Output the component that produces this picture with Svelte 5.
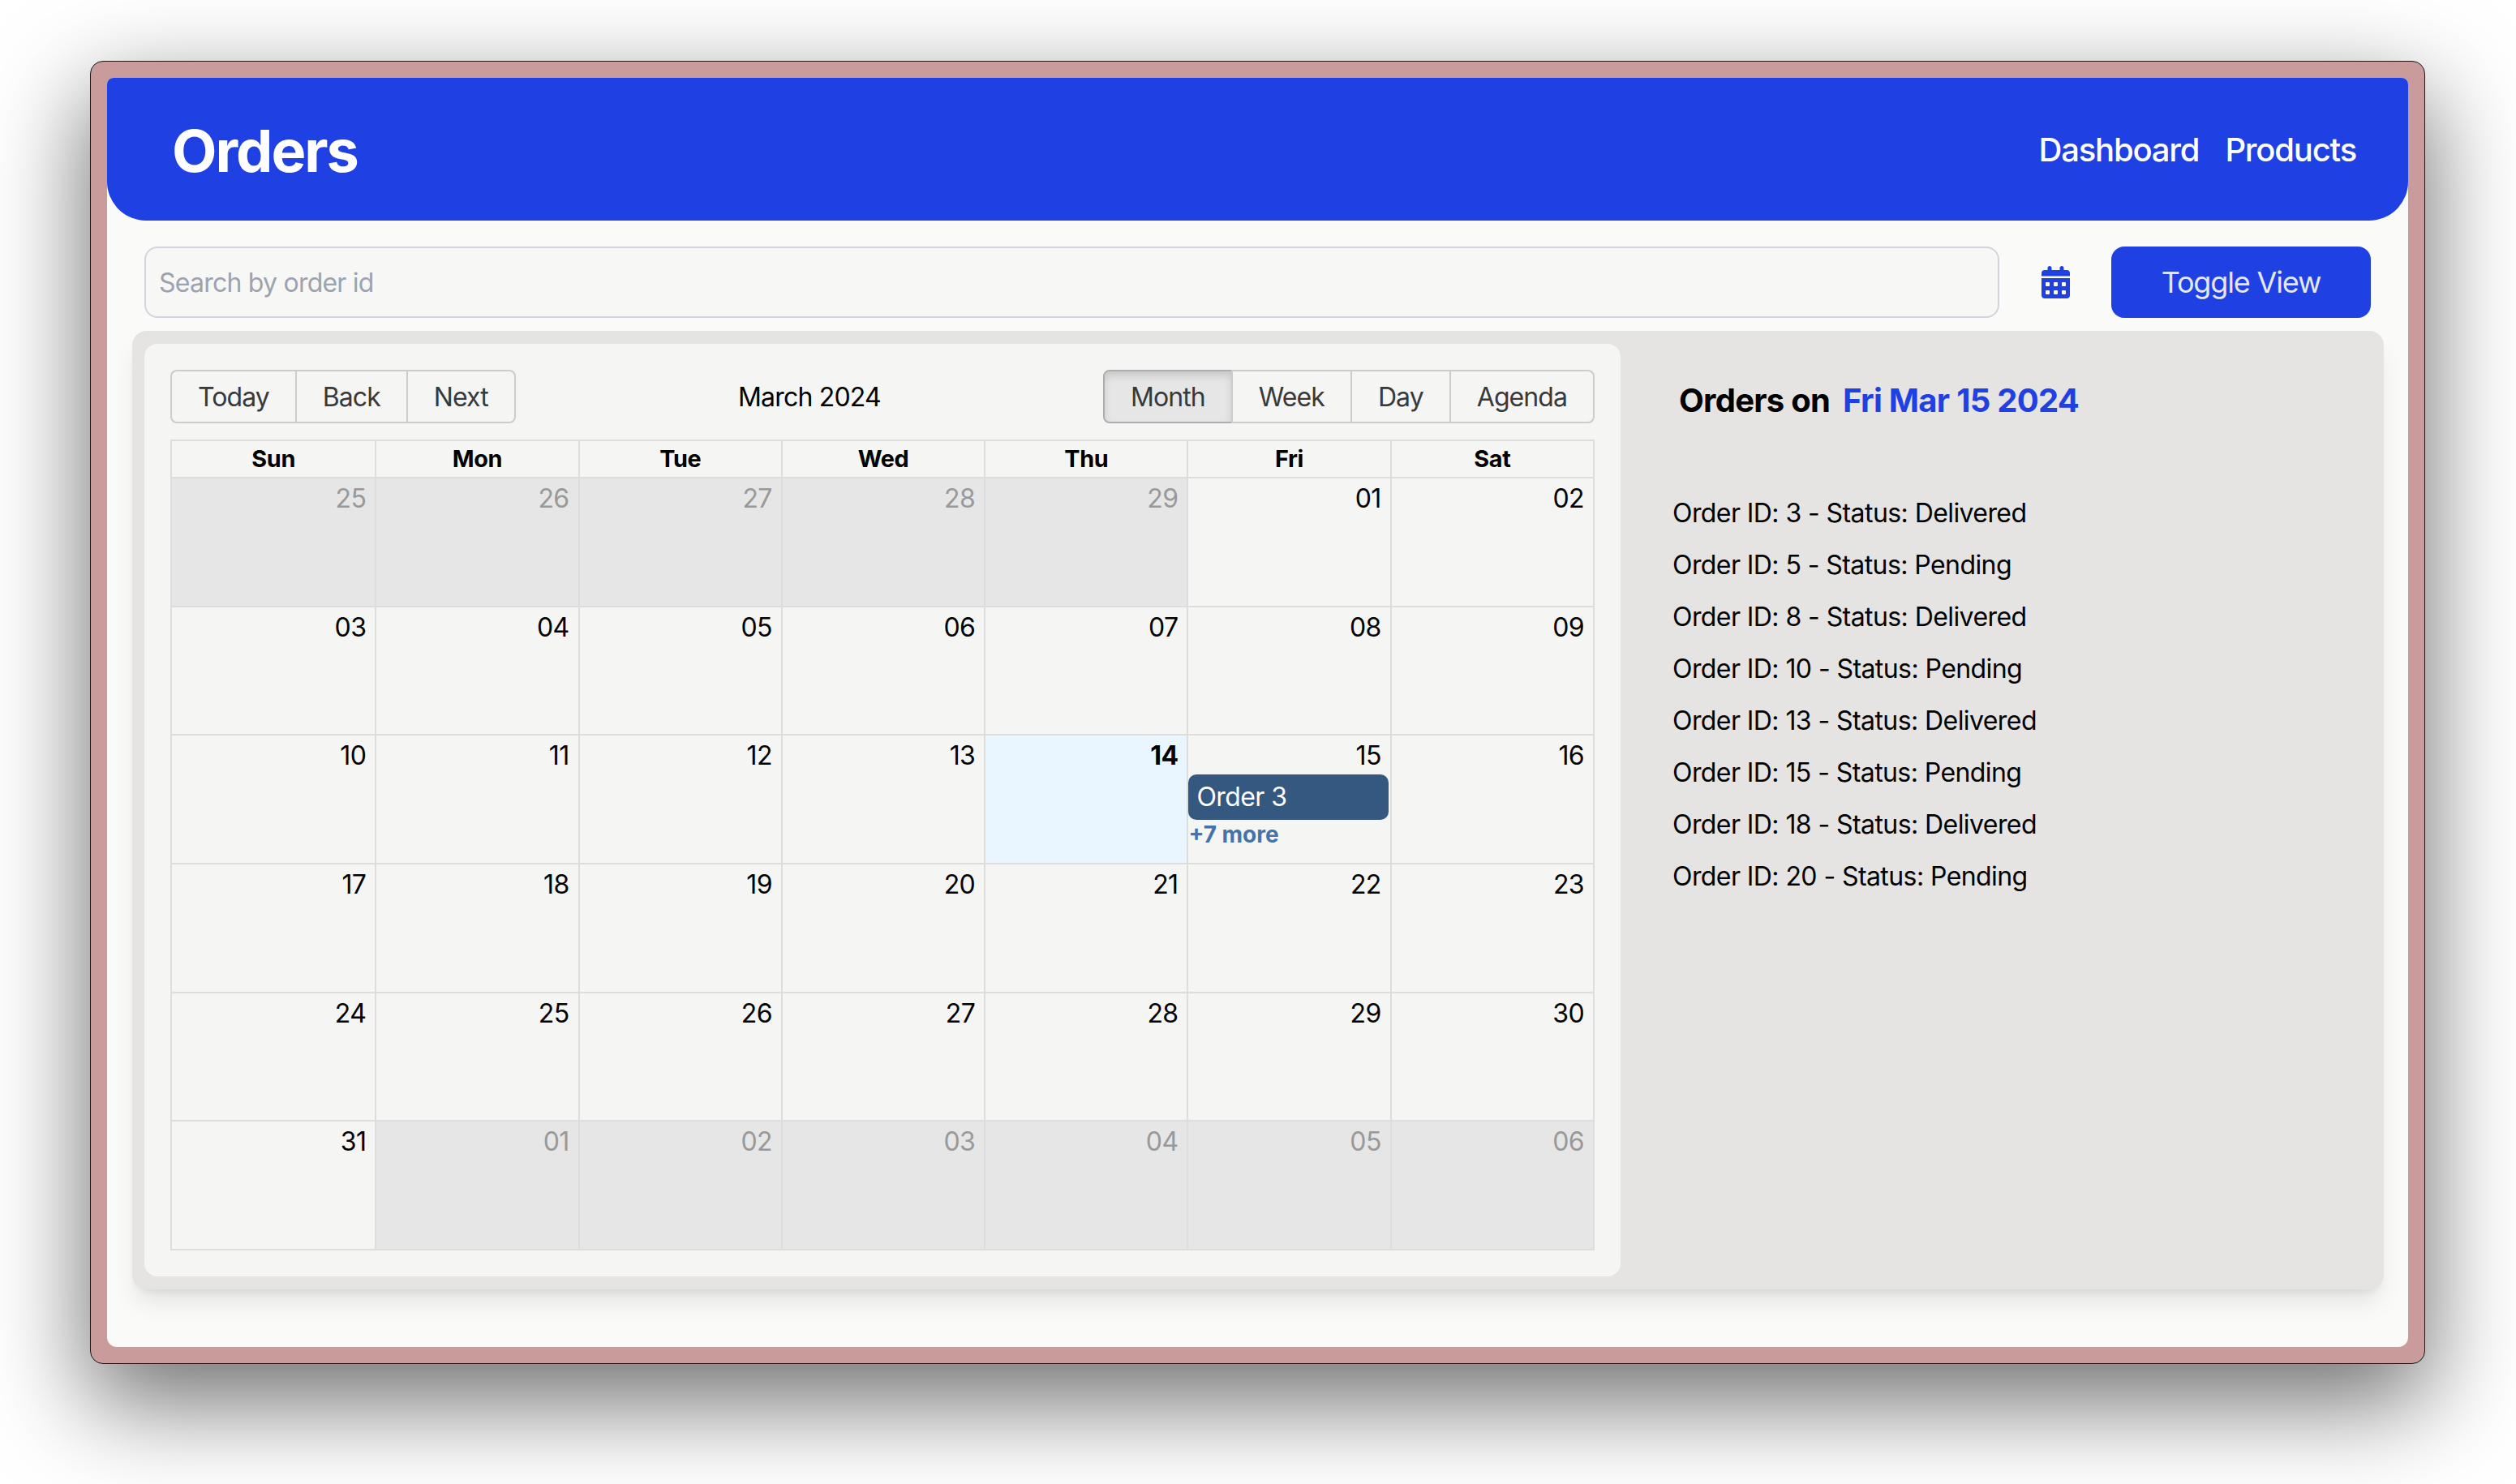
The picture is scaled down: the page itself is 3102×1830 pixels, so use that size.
<script lang="ts">
  const dayNames = ['Sun', 'Mon', 'Tue', 'Wed', 'Thu', 'Fri', 'Sat'];
  const pad = (n: number) => String(n).padStart(2, '0');

  // march 2024 month view, 6 weeks starting feb 25
  const cells = [];
  for (let i = 0; i < 42; i++) {
    const d = new Date(2024, 1, 25 + i);
    cells.push({ label: pad(d.getDate()), off: d.getMonth() !== 2, day: d.getDate() });
  }
  const weeks = [0, 1, 2, 3, 4, 5].map((w) => cells.slice(w * 7, w * 7 + 7));

  const orders = [
    { id: 3, status: 'Delivered' },
    { id: 5, status: 'Pending' },
    { id: 8, status: 'Delivered' },
    { id: 10, status: 'Pending' },
    { id: 13, status: 'Delivered' },
    { id: 15, status: 'Pending' },
    { id: 18, status: 'Delivered' },
    { id: 20, status: 'Pending' },
  ];
</script>

<div class="stage">
  <div class="frame">
    <div class="window">
      <header class="topbar">
        <h1>Orders</h1>
        <nav>
          <span>Dashboard</span>
          <span>Products</span>
        </nav>
      </header>

      <div class="controls">
        <input class="search" type="text" placeholder="Search by order id" />
        <svg class="cal-icon" viewBox="0 0 448 512" aria-hidden="true">
          <path d="M128 0c17.7 0 32 14.3 32 32V64H288V32c0-17.7 14.3-32 32-32s32 14.3 32 32V64h48c26.5 0 48 21.5 48 48v48H0V112C0 85.5 21.5 64 48 64H96V32c0-17.7 14.3-32 32-32zM0 192H448V464c0 26.5-21.5 48-48 48H48c-26.5 0-48-21.5-48-48V192zm64 80v32c0 8.8 7.2 16 16 16h32c8.8 0 16-7.2 16-16V272c0-8.8-7.2-16-16-16H80c-8.8 0-16 7.2-16 16zm128 0v32c0 8.8 7.2 16 16 16h32c8.8 0 16-7.2 16-16V272c0-8.8-7.2-16-16-16H208c-8.8 0-16 7.2-16 16zm144-16c-8.8 0-16 7.2-16 16v32c0 8.8 7.2 16 16 16h32c8.8 0 16-7.2 16-16V272c0-8.8-7.2-16-16-16H336zM64 400v32c0 8.8 7.2 16 16 16h32c8.8 0 16-7.2 16-16V400c0-8.8-7.2-16-16-16H80c-8.8 0-16 7.2-16 16zm144-16c-8.8 0-16 7.2-16 16v32c0 8.8 7.2 16 16 16h32c8.8 0 16-7.2 16-16V400c0-8.8-7.2-16-16-16H208zm112 16v32c0 8.8 7.2 16 16 16h32c8.8 0 16-7.2 16-16V400c0-8.8-7.2-16-16-16H336c-8.8 0-16 7.2-16 16z" />
        </svg>
        <button class="toggle" type="button">Toggle View</button>
      </div>

      <section class="panel">
        <div class="calendar">
          <div class="toolbar">
            <div class="btn-group">
              <button type="button">Today</button>
              <button type="button">Back</button>
              <button type="button">Next</button>
            </div>
            <span class="toolbar-label">March 2024</span>
            <div class="btn-group">
              <button type="button" class="active">Month</button>
              <button type="button">Week</button>
              <button type="button">Day</button>
              <button type="button">Agenda</button>
            </div>
          </div>

          <div class="month">
            <div class="month-header">
              {#each dayNames as name}
                <div class="head-cell">{name}</div>
              {/each}
            </div>
            {#each weeks as week}
              <div class="month-row">
                {#each week as cell}
                  <div class="cell" class:off={cell.off} class:today={!cell.off && cell.day === 14}>
                    <div class="date">{cell.label}</div>
                    {#if !cell.off && cell.day === 15}
                      <div class="event">Order 3</div>
                      <div class="more">+7 more</div>
                    {/if}
                  </div>
                {/each}
              </div>
            {/each}
          </div>
        </div>

        <aside class="details">
          <h2>Orders on <span>Fri Mar 15 2024</span></h2>
          <ul>
            {#each orders as order}
              <li>Order ID: {order.id} - Status: {order.status}</li>
            {/each}
          </ul>
        </aside>
      </section>
    </div>
  </div>
</div>

<style>
  :global(body) {
    margin: 0;
    background: #fff;
  }

  .stage {
    width: 3102px;
    height: 1830px;
    box-sizing: border-box;
    padding: 75px 0 0 111px;
    font-family: Inter, "Liberation Sans", sans-serif;
    color: #000;
    overflow: hidden;
  }

  .frame {
    width: 2879px;
    height: 1607px;
    box-sizing: border-box;
    padding: 20px;
    background: #c99b9b;
    border: 1px solid #1a1a1a;
    border-radius: 16px;
    box-shadow: 0 44px 120px 4px rgba(0, 0, 0, 0.56);
  }

  .window {
    height: 100%;
    background: #fafaf8;
    border-radius: 8px 8px 12px 12px;
    display: flex;
    flex-direction: column;
  }

  .topbar {
    height: 176px;
    flex-shrink: 0;
    box-sizing: border-box;
    padding: 0 64px 0 80px;
    display: flex;
    align-items: center;
    justify-content: space-between;
    background: #1f41e3;
    color: #fff;
    border-radius: 8px 8px 48px 48px;
  }

  h1 {
    margin: 0;
    padding-top: 3px;
    font-size: 72px;
    line-height: 80px;
    font-weight: 700;
    letter-spacing: -0.028em;
  }

  nav {
    display: flex;
    gap: 32px;
    font-size: 40px;
    font-weight: 500;
    letter-spacing: -0.03em;
  }

  .controls {
    margin-top: 32px;
    padding: 0 46px;
    display: flex;
    align-items: center;
  }

  .search {
    flex: 1;
    min-width: 0;
    height: 88px;
    box-sizing: border-box;
    padding: 0 16px;
    background: #f7f7f5;
    border: 2px solid #d1d5db;
    border-radius: 16px;
    font: 400 32px Inter, sans-serif;
    letter-spacing: -0.024em;
    outline: none;
  }

  .search::placeholder {
    color: #9ca3af;
    opacity: 1;
  }

  .cal-icon {
    width: 35px;
    height: 40px;
    margin: 0 51px 0 52px;
    fill: #1f41e3;
    flex-shrink: 0;
  }

  .toggle {
    width: 320px;
    height: 88px;
    background: #1f41e3;
    color: #e5e7eb;
    border: none;
    border-radius: 16px;
    font: 400 36px Inter, sans-serif;
    letter-spacing: -0.032em;
    flex-shrink: 0;
  }

  .panel {
    margin: 16px 30px 0 31px;
    height: 1182px;
    box-sizing: border-box;
    padding: 16px 15px;
    display: flex;
    background: #e5e4e2;
    border-radius: 18px;
    box-shadow: 0 20px 30px -6px rgba(0, 0, 0, 0.1), 0 8px 12px -8px rgba(0, 0, 0, 0.1);
  }

  .calendar {
    width: 1820px;
    flex-shrink: 0;
    box-sizing: border-box;
    padding: 32px;
    background: #f5f5f3;
    border-radius: 16px;
    display: flex;
    flex-direction: column;
  }

  .toolbar {
    height: 66px;
    margin-bottom: 20px;
    display: flex;
    align-items: center;
    font-size: 32px;
    letter-spacing: -0.025em;
    flex-shrink: 0;
  }

  .toolbar-label {
    flex: 1;
    text-align: center;
  }

  .btn-group {
    display: flex;
    height: 66px;
  }

  .btn-group button {
    margin: 0 0 0 -2px;
    padding: 0 32px;
    background: none;
    border: 2px solid #ccc;
    color: #373a3c;
    font: 400 32px Inter, sans-serif;
    letter-spacing: -0.029em;
  }

  .btn-group button:first-child {
    margin-left: 0;
    border-radius: 8px 0 0 8px;
  }

  .btn-group button:last-child {
    border-radius: 0 8px 8px 0;
  }

  .btn-group button.active {
    background: #e6e6e6;
    border-color: #adadad;
    box-shadow: inset 0 6px 10px rgba(0, 0, 0, 0.125);
  }

  .month {
    flex: 1;
    border: 2px solid #ddd;
    display: flex;
    flex-direction: column;
    min-height: 0;
  }

  .month-header {
    height: 44px;
    display: grid;
    grid-template-columns: repeat(7, 1fr);
    flex-shrink: 0;
  }

  .head-cell {
    text-align: center;
    font-size: 28.8px;
    font-weight: 700;
    line-height: 44px;
    letter-spacing: -0.012em;
    border-left: 2px solid #ddd;
  }

  .head-cell:first-child {
    border-left: none;
  }

  .month-row {
    flex: 1;
    min-height: 0;
    display: grid;
    grid-template-columns: repeat(7, 1fr);
    border-top: 2px solid #ddd;
  }

  .cell {
    border-left: 2px solid #ddd;
    min-width: 0;
  }

  .cell:first-child {
    border-left: none;
  }

  .cell.off {
    background: #e6e6e6;
    color: #999;
  }

  .cell.today {
    background: #eaf6ff;
  }

  .date {
    padding: 1px 11px 0 0;
    text-align: right;
    font-size: 32px;
    line-height: 47px;
    letter-spacing: -0.02em;
  }

  .today .date {
    font-weight: 700;
  }

  .event {
    margin-right: 2px;
    padding: 4px 10px;
    background: #345880;
    color: #fff;
    border-radius: 10px;
    font-size: 32px;
    line-height: 48px;
    letter-spacing: -0.018em;
  }

  .more {
    margin-top: 2px;
    color: #4572ab;
    font-size: 28px;
    font-weight: 700;
    line-height: 32px;
  }

  .details {
    flex: 1;
    min-width: 0;
    padding: 40px 0 0 64px;
  }

  h2 {
    margin: 0 0 85px 8px;
    font-size: 40px;
    line-height: 60px;
    font-weight: 700;
    letter-spacing: -0.018em;
  }

  h2 span {
    margin-left: 7px;
    color: #1f41e3;
  }

  ul {
    list-style: none;
    margin: 0;
    padding: 0;
  }

  li {
    font-size: 32px;
    line-height: 48px;
    margin-bottom: 16px;
    letter-spacing: -0.018em;
  }
</style>
